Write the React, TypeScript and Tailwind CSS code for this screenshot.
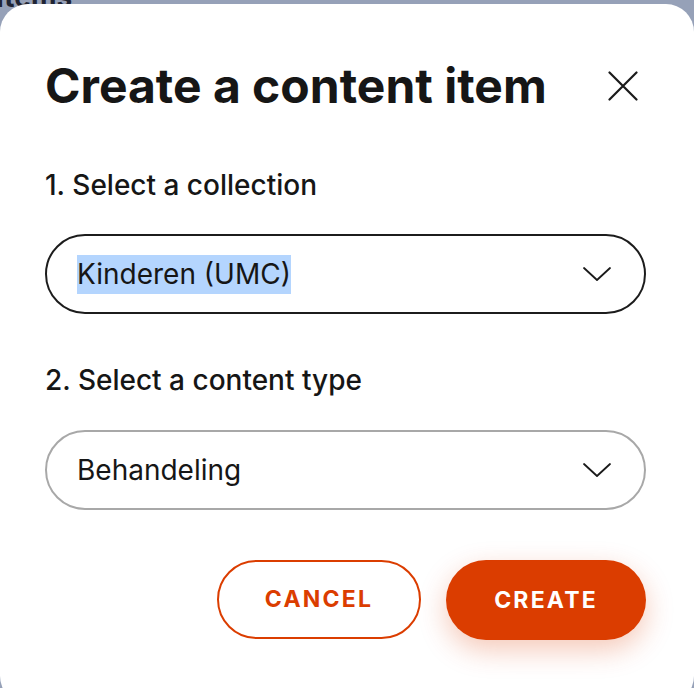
import * as React from 'react';

function Chevron() {
  return (
    <svg width="30" height="16" viewBox="0 0 30 16" fill="none" className="shrink-0">
      <path d="M2 2 L15 14 L28 2" stroke="#1a1a1a" strokeWidth="1.8" strokeLinecap="round" strokeLinejoin="round" />
    </svg>
  );
}

function CloseIcon() {
  return (
    <svg width="30" height="30" viewBox="0 0 30 30" fill="none">
      <path d="M1.5 1.5 L28.5 28.5 M28.5 1.5 L1.5 28.5" stroke="#1a1a1a" strokeWidth="2.2" strokeLinecap="round" />
    </svg>
  );
}

export default function App() {
  return (
    <div className="relative w-[694px] h-[688px] overflow-hidden bg-[#96a1b8] font-['Inter','Liberation_Sans',sans-serif]">
      {/* page content behind the overlay */}
      <div className="absolute left-[-4px] top-[-24px] text-[28px] font-bold text-[#1f2433]">Items</div>

      <div className="relative mt-[4px] h-[700px] w-[694px] rounded-[28px] bg-white pt-[54px] pl-[45px] pr-[48px]">
        <div className="flex items-center justify-between">
          <h2 className="text-[48px] leading-[56px] font-bold text-[#161616]">
            Create a content item
          </h2>
          <button className="mr-[8px] flex h-[30px] w-[30px] items-center justify-center">
            <CloseIcon />
          </button>
        </div>

        <div className="mt-[54px] text-[28px] leading-[34px] font-medium text-[#161616]">
          1. Select a collection
        </div>
        <div className="mt-[32px] flex h-[80px] items-center justify-between rounded-full border-2 border-[#1c1c1c] pl-[30px] pr-[32px]">
          <span className="bg-[#b4d5fe] text-[28px] leading-[39px] text-[#161616]">Kinderen (UMC)</span>
          <Chevron />
        </div>

        <div className="mt-[49px] text-[28px] leading-[34px] font-medium text-[#161616]">
          2. Select a content type
        </div>
        <div className="mt-[33px] flex h-[80px] items-center justify-between rounded-full border-2 border-[#a8a8a8] pl-[30px] pr-[32px]">
          <span className="text-[28px] leading-[39px] text-[#161616]">Behandeling</span>
          <Chevron />
        </div>

        <div className="mt-[50px] flex justify-end gap-[25px]">
          <button className="flex h-[79px] w-[204px] items-center justify-center rounded-full border-2 border-[#db3d00] text-[23px] font-bold tracking-[2.2px] text-[#db3d00]">
            CANCEL
          </button>
          <button className="flex h-[80px] w-[200px] items-center justify-center rounded-full bg-[#db3d00] text-[23px] font-bold tracking-[2.2px] text-white shadow-[0_10px_28px_rgba(219,61,0,0.28)]">
            CREATE
          </button>
        </div>
      </div>
    </div>
  );
}
